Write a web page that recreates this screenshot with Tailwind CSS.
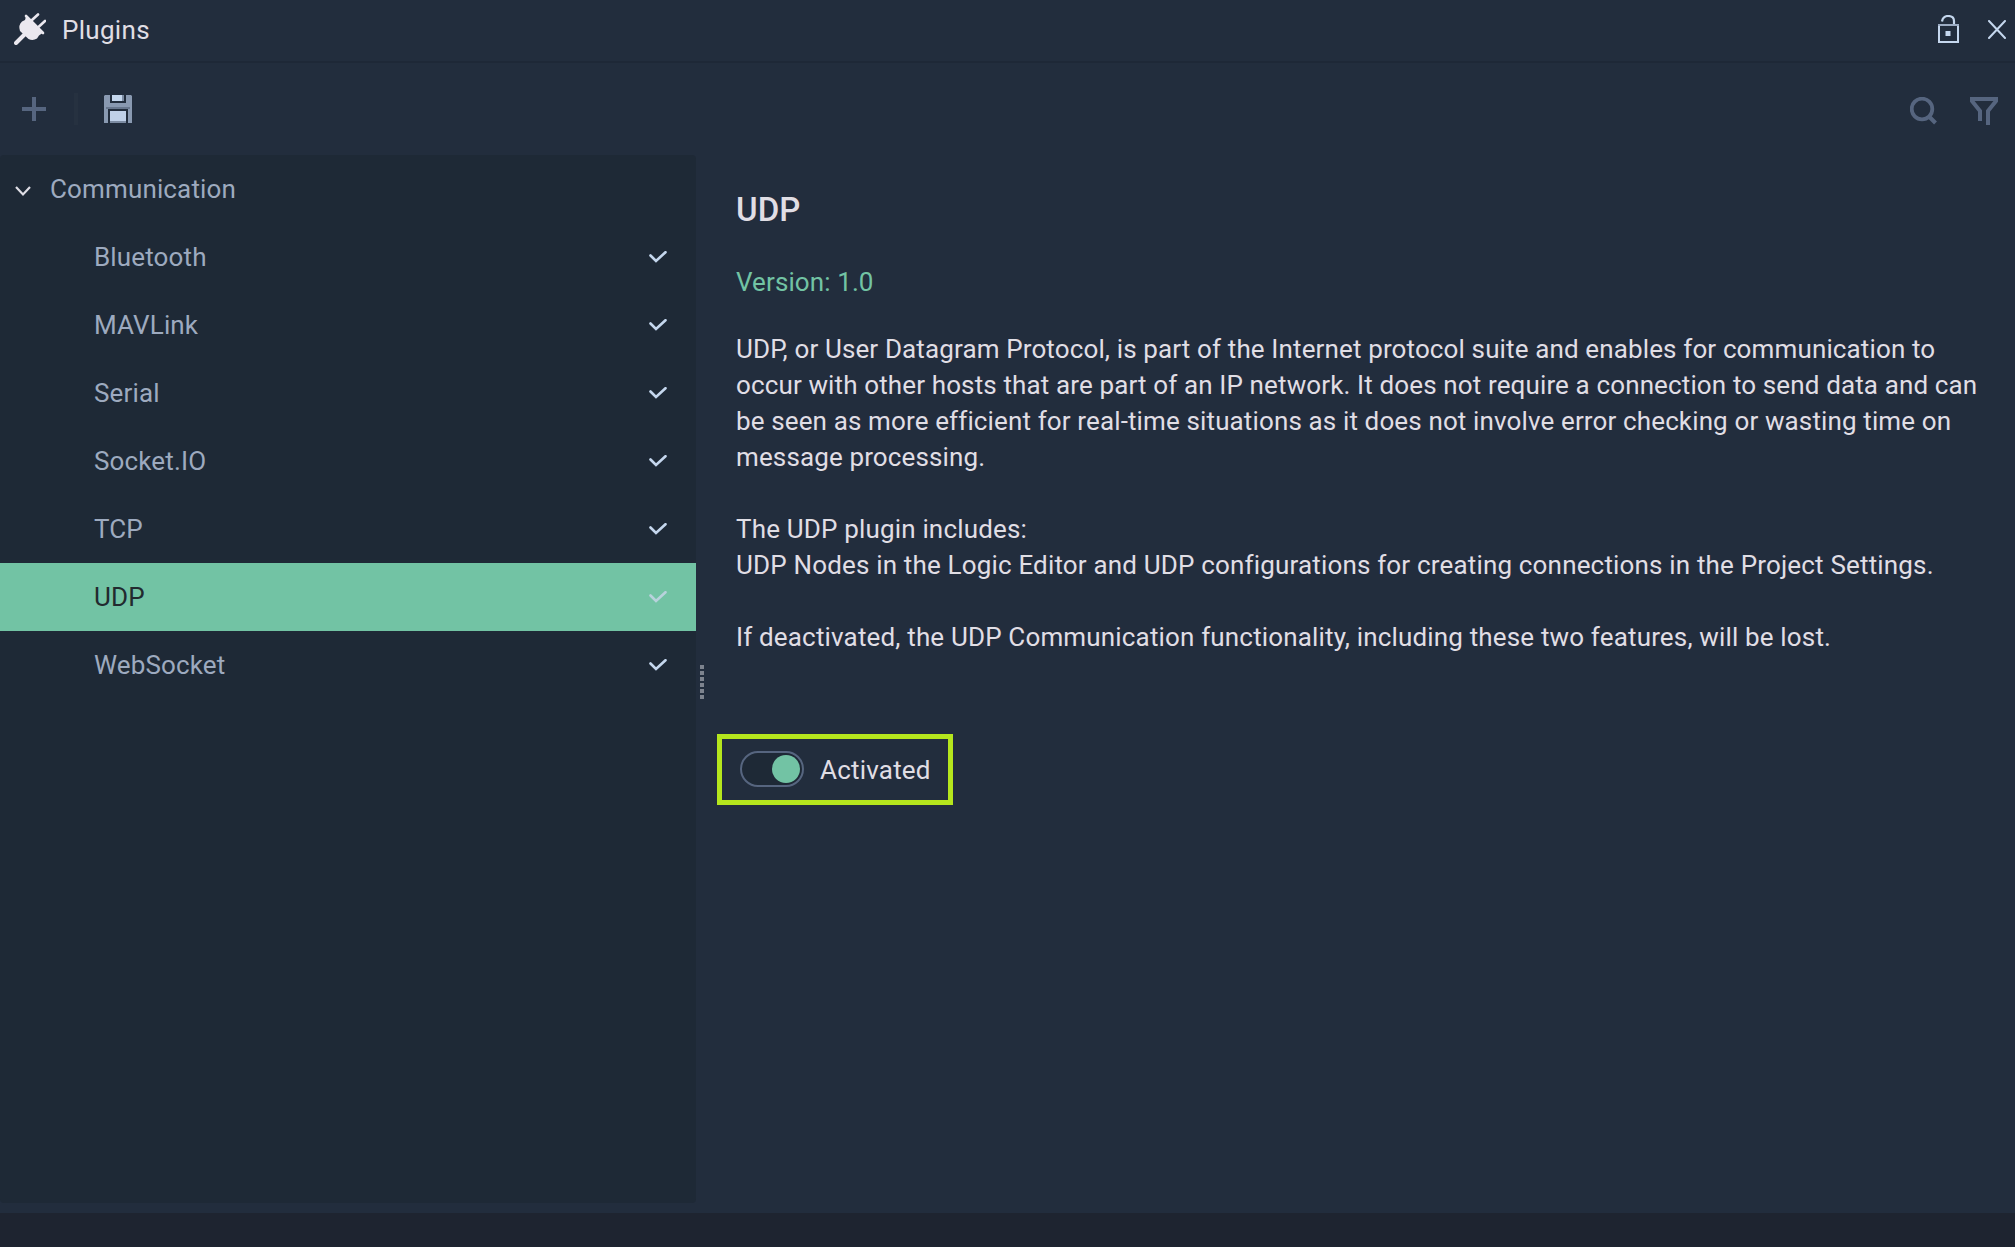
<!DOCTYPE html>
<html lang="en">
<head>
<meta charset="utf-8">
<title>Plugins</title>
<script src="https://cdn.jsdelivr.net/npm/@tailwindcss/browser@4"></script>
</head>
<body class="w-[2015px] h-[1247px] overflow-hidden bg-[#222d3d] font-[Roboto,sans-serif] text-[26px] tracking-[0.14px] text-[#e0dee5] flex flex-col">
<header class="h-[63px] shrink-0 border-b-2 border-[#1e2837] flex items-center pl-[14px] pr-[9px]">
  <svg class="w-8 h-8 mt-[-3px]" viewBox="0 0 32 32" fill="none" stroke="#ebe8ef" stroke-linecap="round"><path d="M2 30L11 21" stroke-width="4"/><path d="M18 7L24 1.500M25 13.500L31 8" stroke-width="2.600"/><path d="M12 3L29 20" stroke-width="2.600"/><path d="M12 3.500L28.500 20L25 22.500L23 25.500Q19 28 14.500 26L6 18Q4 12 8 8.500L11 7Z" fill="#ebe8ef" stroke="none"/></svg>
  <h1 class="ml-4 mt-[-1px] leading-9 tracking-[0.3px]">Plugins</h1>
  <div class="ml-auto flex items-center gap-[29px] mt-[-3px]">
    <svg class="w-[21px] h-7" viewBox="0 0 21 28" fill="none" stroke="#c5d7ee"><path d="M4 6.500Q5 1 10 1Q16 1 16 6V10" stroke-width="2.200"/><path d="M1 9.500V27M0 27H21M20 27V10" stroke-width="2"/><path d="M0 10H21" stroke="#9cacc3" stroke-width="2"/><rect x="7.500" y="16" width="5" height="5" fill="#c5d7ee" stroke="none"/></svg>
    <svg class="w-[18px] h-[19px]" viewBox="0 0 18 19" fill="none" stroke="#c5d7ee" stroke-width="2" stroke-linecap="round"><path d="M1 1L17 18M17 1L1 18"/></svg>
  </div>
</header>
<div class="h-[92px] shrink-0 flex items-center pl-[22px] pr-[17px]">
  <svg class="w-6 h-6" viewBox="0 0 24 24" stroke="#56657f" stroke-width="4"><path d="M12 0V24M0 12H24"/></svg>
  <div class="w-1 h-8 ml-7 bg-[#263140]"></div>
  <svg class="w-7 h-7 ml-[26px]" viewBox="0 0 28 28"><path d="M1 0H27L28 1V28H0V1Z" fill="#8999b1"/><path d="M6 0H22V8H6Z" fill="#222d3d"/><path d="M8 0H18V6H8Z" fill="#c5d7ee"/><path d="M18 0H20V6H18Z" fill="#7c8ba2"/><path d="M4 14H24V28H4Z" fill="#222d3d"/><path d="M2 12H26V14H2Z" fill="#68778e"/><path d="M6 16H22V26H6Z" fill="#bfd0e8"/><path d="M6 26H22V28H6Z" fill="#7c8ba2"/></svg>
  <div class="ml-auto flex gap-8 mt-1">
    <svg class="w-7 h-7" viewBox="0 0 28 28" fill="none" stroke="#56657f"><circle cx="12" cy="12" r="10.300" stroke-width="3.800"/><path d="M19 19.500L25.500 26" stroke-width="4"/></svg>
    <svg class="w-7 h-7" viewBox="0 0 28 28" fill="none" stroke="#56657f" stroke-width="4"><path d="M10 24V14L2 4V2H26V4L18 14V28"/></svg>
  </div>
</div>
<main class="h-[1058px] shrink-0 flex">
  <nav class="w-[696px] h-[1048px] shrink-0 rounded-[4px] bg-[#1e2936] text-[#9daabf]">
    <div class="h-[68px] flex items-center pl-[14px]"><svg class="w-[18px] h-3 mt-1" viewBox="0 0 18 12" fill="none" stroke="#dedde5" stroke-width="2.200"><path d="M2 2L9 9.500L16 2"/></svg><span class="ml-[18px]">Communication</span></div>
    <div class="h-[68px] flex items-center justify-between pl-[94px] pr-[28px]"><span>Bluetooth</span><svg class="w-[19px] h-3" viewBox="0 0 19 12" fill="none" stroke="#c5d7ee" stroke-width="2.600" stroke-linecap="round"><path d="M1.500 4.500L7 10L16.500 1.200"/></svg></div>
    <div class="h-[68px] flex items-center justify-between pl-[94px] pr-[28px]"><span>MAVLink</span><svg class="w-[19px] h-3" viewBox="0 0 19 12" fill="none" stroke="#c5d7ee" stroke-width="2.600" stroke-linecap="round"><path d="M1.500 4.500L7 10L16.500 1.200"/></svg></div>
    <div class="h-[68px] flex items-center justify-between pl-[94px] pr-[28px]"><span>Serial</span><svg class="w-[19px] h-3" viewBox="0 0 19 12" fill="none" stroke="#c5d7ee" stroke-width="2.600" stroke-linecap="round"><path d="M1.500 4.500L7 10L16.500 1.200"/></svg></div>
    <div class="h-[68px] flex items-center justify-between pl-[94px] pr-[28px]"><span>Socket.IO</span><svg class="w-[19px] h-3" viewBox="0 0 19 12" fill="none" stroke="#c5d7ee" stroke-width="2.600" stroke-linecap="round"><path d="M1.500 4.500L7 10L16.500 1.200"/></svg></div>
    <div class="h-[68px] flex items-center justify-between pl-[94px] pr-[28px]"><span>TCP</span><svg class="w-[19px] h-3" viewBox="0 0 19 12" fill="none" stroke="#c5d7ee" stroke-width="2.600" stroke-linecap="round"><path d="M1.500 4.500L7 10L16.500 1.200"/></svg></div>
    <div class="h-[68px] flex items-center justify-between pl-[94px] pr-[28px] bg-[#72c3a4] text-[#222a2f]"><span>UDP</span><svg class="w-[19px] h-3" viewBox="0 0 19 12" fill="none" stroke="#b8d2dc" stroke-width="2.600" stroke-linecap="round"><path d="M1.500 4.500L7 10L16.500 1.200"/></svg></div>
    <div class="h-[68px] flex items-center justify-between pl-[94px] pr-[28px]"><span>WebSocket</span><svg class="w-[19px] h-3" viewBox="0 0 19 12" fill="none" stroke="#c5d7ee" stroke-width="2.600" stroke-linecap="round"><path d="M1.500 4.500L7 10L16.500 1.200"/></svg></div>
  </nav>
  <div class="w-[21px] shrink-0 pl-1 pt-[510px]">
    <svg class="w-1 h-[34px]" viewBox="0 0 4 34"><path d="M2 0V34" stroke="#7d838e" stroke-width="4" stroke-dasharray="4 2"/></svg>
  </div>
  <section class="flex-1">
    <div class="pl-[19px]">
      <h2 class="pt-[35px] text-[33px] leading-10 font-medium tracking-[0.1px]">UDP</h2>
      <p class="mt-[34px] leading-9 tracking-[0.1px] text-[#72c3a4]">Version: 1.0</p>
      <div class="mt-[31px] leading-9 whitespace-nowrap">
        <p class="tracking-[0.13px]">UDP, or User Datagram Protocol, is part of the Internet protocol suite and enables for communication to<br>occur with other hosts that are part of an IP network. It does not require a connection to send data and can<br>be seen as more efficient for real-time situations as it does not involve error checking or wasting time on<br>message processing.</p>
        <p class="mt-9 tracking-[0.17px]">The UDP plugin includes:<br>UDP Nodes in the Logic Editor and UDP configurations for creating connections in the Project Settings.</p>
        <p class="mt-9 tracking-[0.16px]">If deactivated, the UDP Communication functionality, including these two features, will be lost.</p>
      </div>
    </div>
    <div class="mt-[79px] w-[236px] h-[71px] border-5 border-[#b5e61d] flex items-center pl-[18px]">
      <div class="w-16 h-9 mt-[-1px] rounded-full border-2 border-[#56657f] bg-[#1e2936] flex items-center justify-end pr-0.5"><div class="size-7 rounded-full bg-[#72c3a4]"></div></div>
      <span class="ml-4 mt-px tracking-[0.2px]">Activated</span>
    </div>
  </section>
</main>
<footer class="flex-1 bg-[#1e2430]"></footer>
</body>
</html>
